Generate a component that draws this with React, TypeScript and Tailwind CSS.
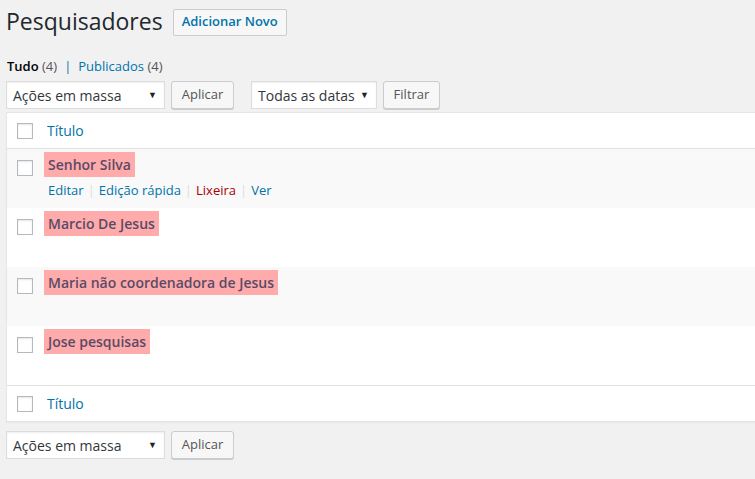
import React from 'react';

const rows = [
  { title: 'Senhor Silva', actions: true },
  { title: 'Marcio De Jesus', actions: false },
  { title: 'Maria não coordenadora de Jesus', actions: false },
  { title: 'Jose pesquisas', actions: false },
];

function Checkbox() {
  return <span className="block w-4 h-4 bg-white border border-[#b4b9be] shadow-[inset_0_1px_2px_rgba(0,0,0,0.1)]" />;
}

function Select({ label, width }: { label: string; width: string }) {
  return (
    <div className={`${width} h-[28px] bg-white border border-[#ddd] shadow-[inset_0_1px_2px_rgba(0,0,0,0.07)] flex items-center justify-between pl-[6px] pr-[7px] text-[14px] text-[#32373c]`}>
      <span>{label}</span>
      <span className="text-[9px] text-[#222]">▼</span>
    </div>
  );
}

function Button({ label, width }: { label: string; width: string }) {
  return (
    <div className={`${width} h-[28px] bg-[#f7f7f7] border border-[#ccc] rounded-[3px] shadow-[0_1px_0_#ccc] flex items-center justify-center text-[13px] text-[#555]`}>
      {label}
    </div>
  );
}

export default function App() {
  return (
    <div className="w-[755px] h-[479px] overflow-hidden bg-[#f1f1f1] text-[#444]" style={{ fontFamily: '"Open Sans", sans-serif' }}>
      <div className="flex items-center pt-[7px] pl-[6px]">
        <h1 className="text-[23px] leading-[29px] text-[#23282d]">Pesquisadores</h1>
        <div className="ml-[10px] mt-[1px] h-[27px] px-[8px] flex items-center bg-[#f7f7f7] border border-[#ccc] rounded-[2px] text-[13px] font-semibold text-[#0073aa]">
          Adicionar Novo
        </div>
      </div>

      <div className="mt-[21px] pl-[7px] text-[13px] leading-[18px] text-[#666]">
        <span className="font-semibold text-black">Tudo</span> <span className="text-[#555]">(4)</span>
        <span className="mx-[7px] text-[#0073aa]">|</span>
        <span className="text-[#0073aa]">Publicados <span className="text-[#555]">(4)</span></span>
      </div>

      <div className="flex items-center mt-[6px] pl-[6px]">
        <Select label="Ações em massa" width="w-[159px]" />
        <div className="ml-[6px]"><Button label="Aplicar" width="w-[63px]" /></div>
        <div className="ml-[17px]"><Select label="Todas as datas" width="w-[126px]" /></div>
        <div className="ml-[6px]"><Button label="Filtrar" width="w-[57px]" /></div>
      </div>

      <div className="ml-[6px] mt-[3px] w-[780px] bg-white border border-[#e5e5e5] shadow-[0_1px_1px_rgba(0,0,0,0.04)]">
        <div className="h-[36px] flex items-center border-b border-[#e1e1e1]">
          <div className="w-[40px] pl-[10px]"><Checkbox /></div>
          <span className="text-[14px] text-[#0073aa]">Título</span>
        </div>

        {rows.map((r, i) => (
          <div key={r.title} className={`h-[59px] flex ${i % 2 === 0 ? 'bg-[#f9f9f9]' : 'bg-white'}`}>
            <div className="w-[40px] pl-[10px] pt-[11px]"><Checkbox /></div>
            <div className="pt-[3px] -ml-[3px]">
              <div className="inline-block h-[25px] leading-[25px] px-[4px] bg-[#ffabab] text-[14px] font-semibold text-[#5a4a66]">
                {r.title}
              </div>
              {r.actions && (
                <div className="mt-[4px] ml-[4px] text-[13px] leading-[18px] text-[#ddd]">
                  <span className="text-[#0073aa]">Editar</span>
                  <span className="mx-[4px]">|</span>
                  <span className="text-[#0073aa]">Edição rápida</span>
                  <span className="mx-[4px]">|</span>
                  <span className="text-[#a00]">Lixeira</span>
                  <span className="mx-[4px]">|</span>
                  <span className="text-[#0073aa]">Ver</span>
                </div>
              )}
            </div>
          </div>
        ))}

        <div className="h-[36px] flex items-center border-t border-[#e1e1e1]">
          <div className="w-[40px] pl-[10px]"><Checkbox /></div>
          <span className="text-[14px] text-[#0073aa]">Título</span>
        </div>
      </div>

      <div className="flex items-center mt-[9px] pl-[6px]">
        <Select label="Ações em massa" width="w-[159px]" />
        <div className="ml-[6px]"><Button label="Aplicar" width="w-[63px]" /></div>
      </div>
    </div>
  );
}
